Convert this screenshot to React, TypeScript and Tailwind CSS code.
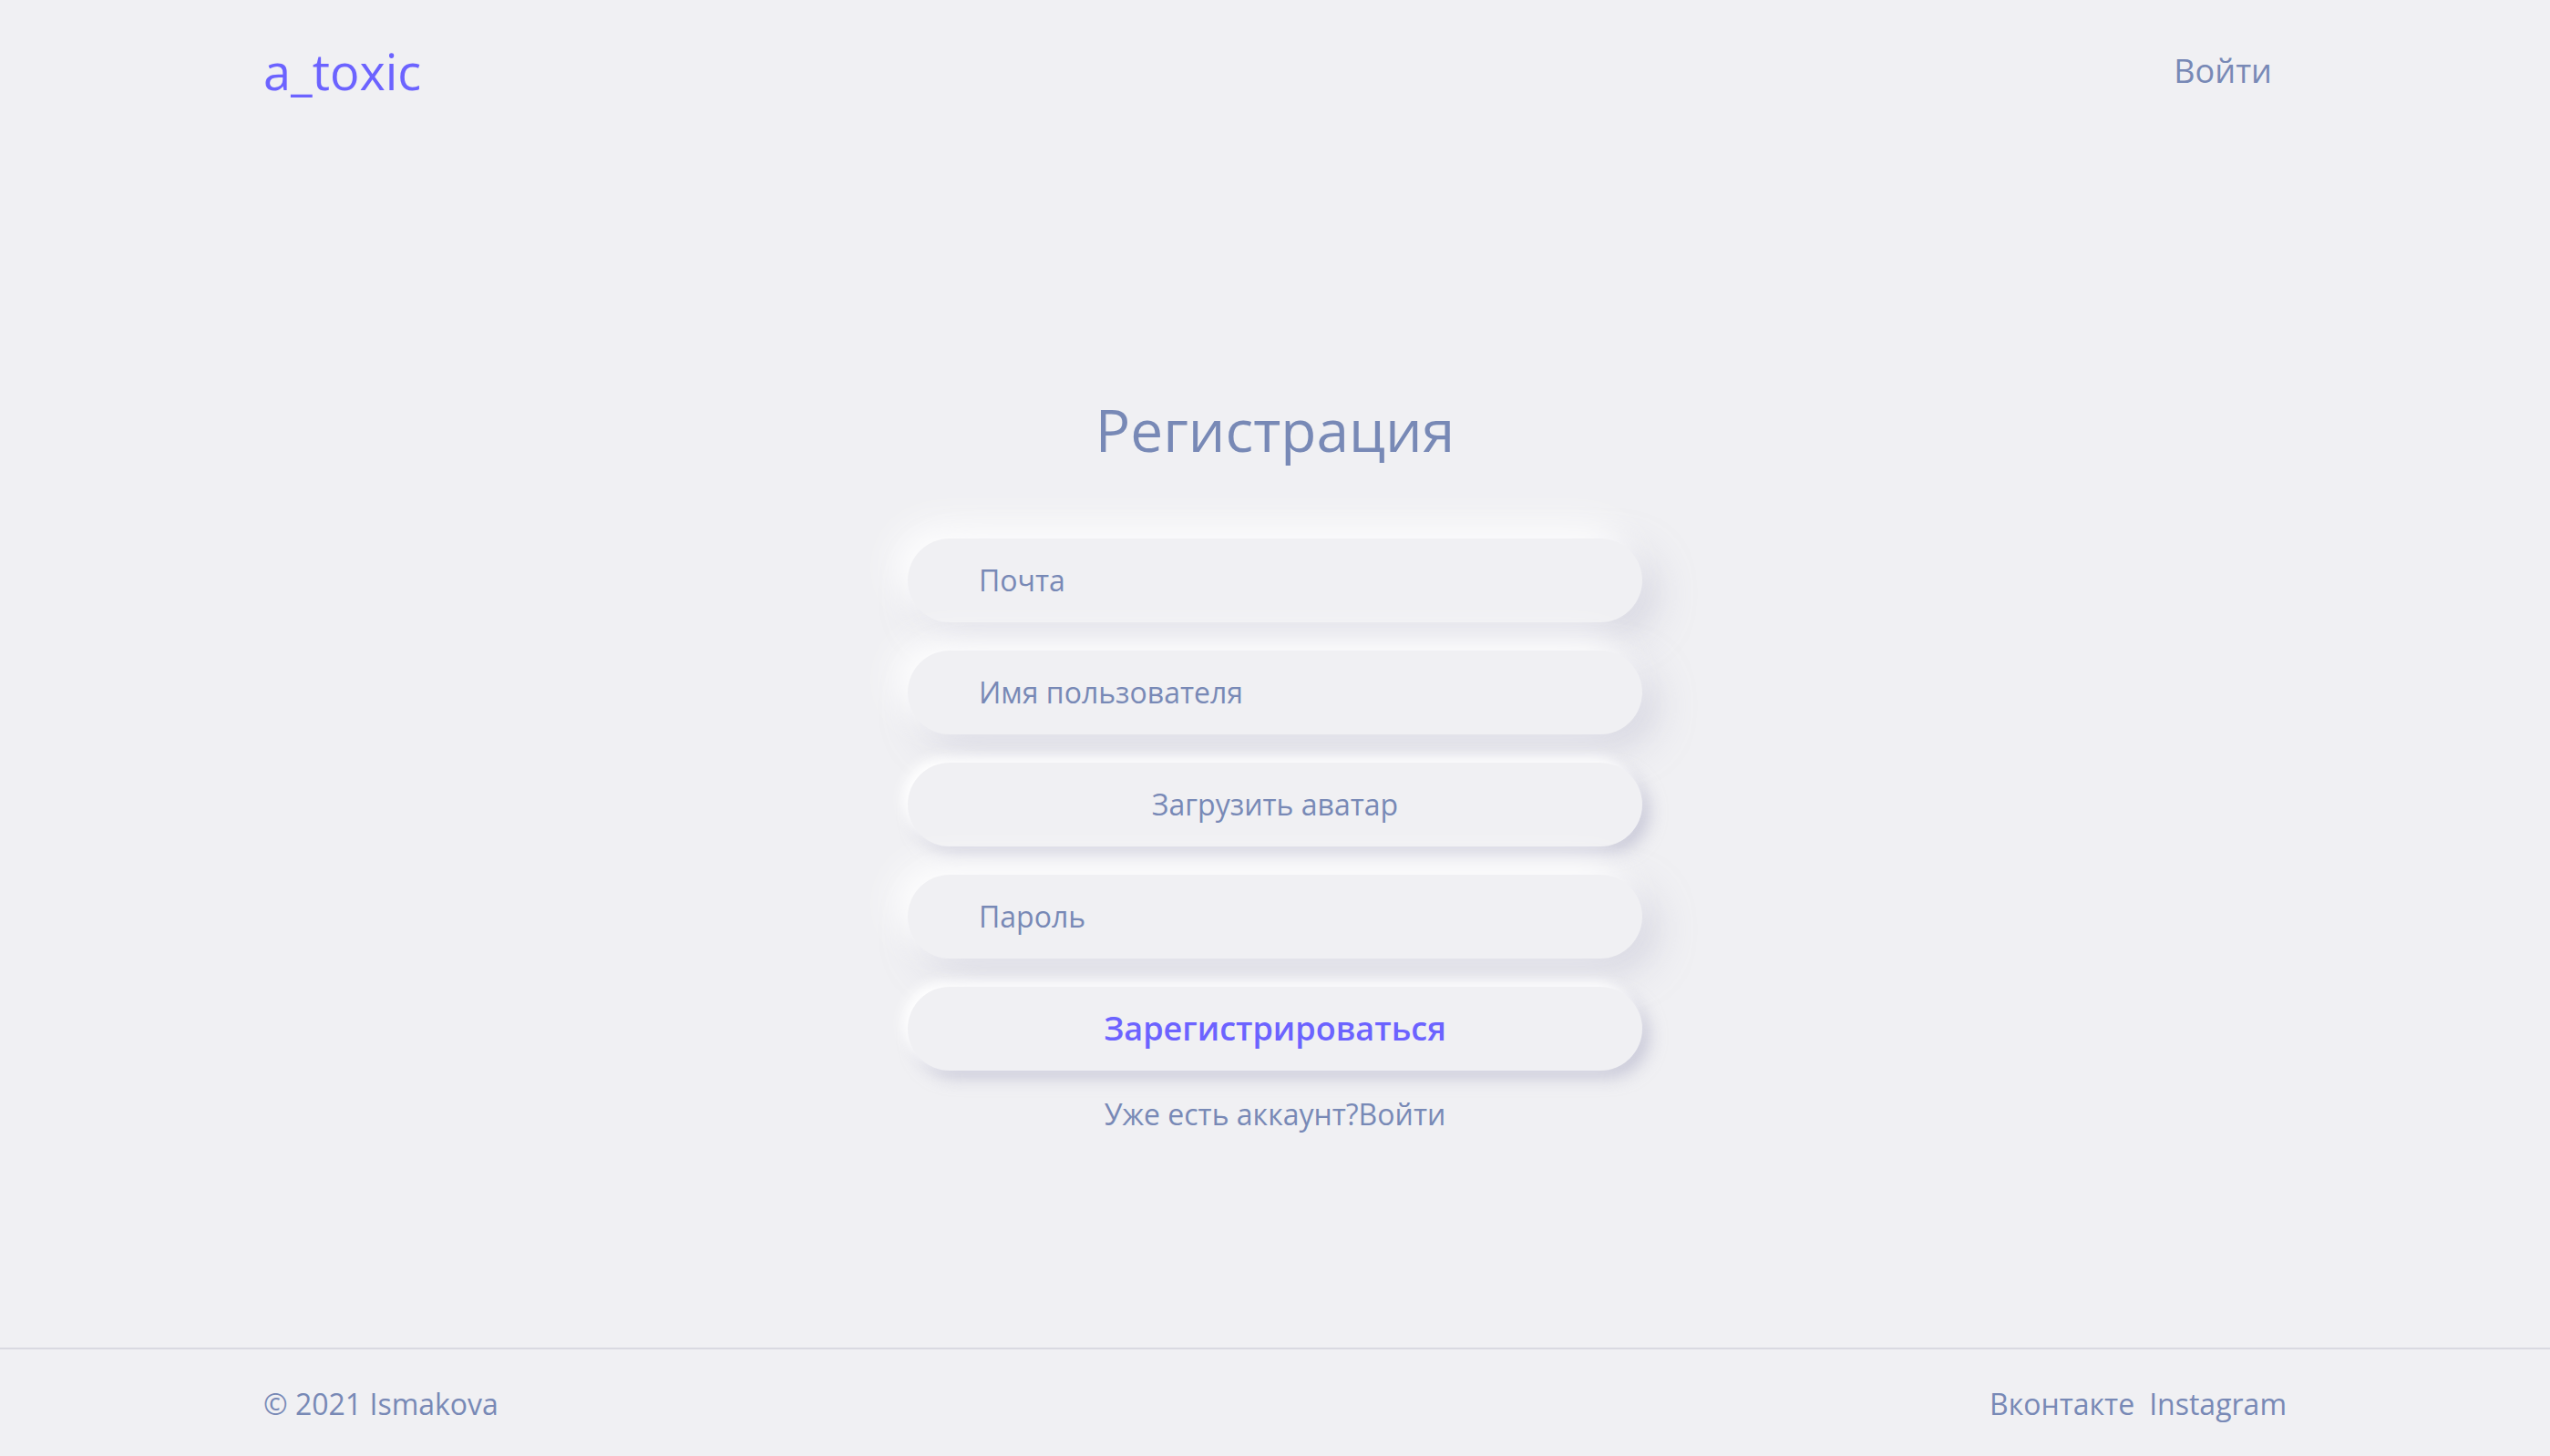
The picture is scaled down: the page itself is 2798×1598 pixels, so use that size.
const FIELD =
  'flex h-[92px] w-full items-center rounded-full bg-[#f0f0f3] px-[78px] text-[32px] text-[#7889b6] shadow-[-14px_-14px_40px_#ffffff,14px_14px_40px_rgba(185,185,205,0.5)]';

const BUTTON =
  'flex h-[92px] w-full items-center justify-center rounded-full bg-[#f0f0f3] shadow-[-6px_-6px_14px_#ffffff,8px_8px_18px_rgba(170,170,195,0.55)]';

export default function App() {
  return (
    <div className="flex min-h-screen flex-col bg-[#f0f0f3] font-['Open_Sans',sans-serif] text-[#7889b6]">
      <header className="h-[154px]">
        <div className="mx-auto flex h-full w-[2220px] items-center justify-between">
          <a href="#" className="pt-[2px] text-[54px] text-[#6c63ff]">
            a_toxic
          </a>
          <a href="#" className="pr-4 pt-[2px] text-[36px] text-[#7889b6]">
            Войти
          </a>
        </div>
      </header>

      <main className="flex flex-1 flex-col items-center pt-[280px]">
        <h1 className="mb-[80px] text-[64px] leading-[1.2] text-[#7889b6]">Регистрация</h1>
        <form className="flex w-[806px] flex-col gap-[31px]" onSubmit={(e) => e.preventDefault()}>
          <div className={FIELD}>Почта</div>
          <div className={FIELD}>Имя пользователя</div>
          <button type="button" className={`${BUTTON} text-[32px] text-[#7889b6]`}>
            Загрузить аватар
          </button>
          <div className={FIELD}>Пароль</div>
          <button type="submit" className={`${BUTTON} text-[36px] font-semibold text-[#6c63ff]`}>
            Зарегистрироваться
          </button>
        </form>
        <p className="mt-[24px] text-[32px] leading-[1.5]">
          Уже есть аккаунт?<a href="#">Войти</a>
        </p>
      </main>

      <footer className="h-[119px] border-t-2 border-[#d9d9e1]">
        <div className="mx-auto flex h-full w-[2220px] items-center justify-between pt-[3px] text-[32px]">
          <span>© 2021 Ismakova</span>
          <div className="flex gap-4">
            <a href="#">Вконтакте</a>
            <a href="#">Instagram</a>
          </div>
        </div>
      </footer>
    </div>
  );
}
